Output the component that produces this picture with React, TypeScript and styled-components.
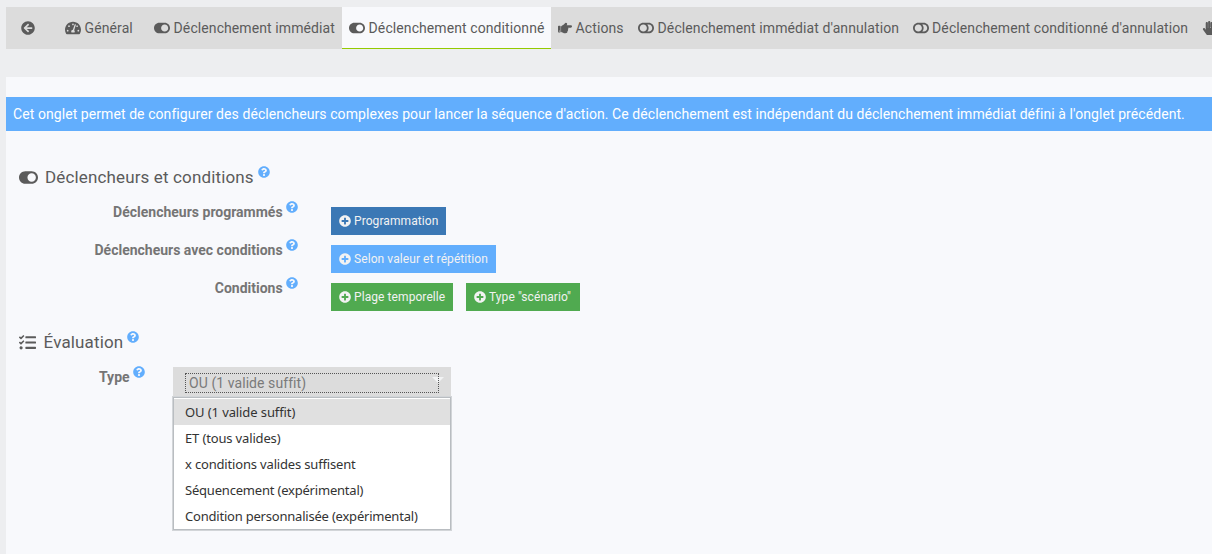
import React from 'react';
import styled, { createGlobalStyle } from 'styled-components';
import {
  FaArrowCircleLeft,
  FaTachometerAlt,
  FaToggleOn,
  FaToggleOff,
  FaHandPointRight,
  FaHandPaper,
  FaQuestionCircle,
  FaPlusCircle,
  FaTasks,
} from 'react-icons/fa';

const Global = createGlobalStyle`
  * { box-sizing: border-box; }
  body {
    margin: 0;
    background: #edeef0;
    color: #5b5b5b;
    font: 14px/20px Roboto, sans-serif;
    overflow: hidden;
  }
  svg { display: block; flex: none; }
`;

const Page = styled.div`
  width: 1212px;
  height: 554px;
  padding: 7px 0 0 6px;
  display: flex;
  flex-direction: column;
  overflow: hidden;
`;

const TabBar = styled.nav`
  height: 42px;
  flex: none;
  display: flex;
  background: #dcdcdc;
  overflow: hidden;
`;

const Tab = styled.a<{ $width: number; $active?: boolean; $indent?: number }>`
  flex: none;
  width: ${(p) => p.$width}px;
  padding-left: ${(p) => p.$indent ?? 7}px;
  display: flex;
  align-items: center;
  gap: 3.6px;
  white-space: nowrap;
  letter-spacing: 0.09px;
  background: ${(p) => (p.$active ? '#f8f9fc' : 'transparent')};
  box-shadow: ${(p) => (p.$active ? 'inset 0 -1px #94ca02' : 'none')};
`;

const Panel = styled.main`
  flex: 1;
  margin-top: 28px;
  padding-top: 20px;
  background: #f8f9fc;
`;

const Notice = styled.div`
  height: 34px;
  padding: 0 7px;
  line-height: 34px;
  letter-spacing: 0.073px;
  color: #fff;
  background: #62aefd;
  white-space: nowrap;
`;

const Legend = styled.h2<{ $top: number; $gap: number }>`
  margin: ${(p) => p.$top}px 0 0 13px;
  height: 24px;
  display: flex;
  align-items: center;
  font-size: 17px;
  font-weight: 400;
  line-height: 24px;
  letter-spacing: 0.14px;
  white-space: nowrap;

  > svg:first-child { margin-right: ${(p) => p.$gap}px; }
`;

const Help = styled(FaQuestionCircle)`
  width: 12px;
  height: 12px;
  margin: -10px 0 0 4px;
  color: #62aefd;
`;

const FormRow = styled.div<{ $top?: number }>`
  display: flex;
  height: 28px;
  margin-top: ${(p) => p.$top ?? 10}px;
`;

const Label = styled.label<{ $width: number; $offset?: number }>`
  width: ${(p) => p.$width}px;
  height: 10px;
  margin-top: ${(p) => p.$offset ?? 0}px;
  flex: none;
  display: flex;
  justify-content: flex-end;
  align-items: center;
  font-weight: 700;
  color: #757575;
  white-space: nowrap;

  ${Help} { margin-left: 3.4px; }
`;

const Buttons = styled.div`
  display: flex;
  gap: 13px;
  margin-left: 33px;
`;

const Button = styled.button<{ $color: string; $width: number }>`
  width: ${(p) => p.$width}px;
  height: 28px;
  padding: 0 0 0 8px;
  border: 0;
  display: flex;
  align-items: center;
  gap: 3px;
  font: 12px/18px Roboto, sans-serif;
  letter-spacing: 0.08px;
  color: #f2f2f2;
  white-space: nowrap;
  background: ${(p) => p.$color};
`;

const Select = styled.div`
  position: relative;
  width: 278px;
  height: 32px;
  margin-left: 28px;
  padding: 6px 12px;
  color: #7a7a7a;
  background: #dcdcdc;
`;

const SelectValue = styled.div`
  position: relative;
  z-index: 1;
  width: 254px;
  height: 20px;
  padding-left: 3px;
  border: 1px dotted #555;
  line-height: 19px;
  letter-spacing: 0.07px;
`;

const Caret = styled.svg`
  position: absolute;
  top: 10px;
  right: 7px;
`;

const Menu = styled.ul`
  position: absolute;
  z-index: 2;
  top: 30px;
  left: 0;
  width: 278px;
  height: 133px;
  margin: 0;
  padding: 1px 0 0;
  list-style: none;
  background: #fff;
  border: 1px solid #b9bdc1;
  box-shadow: 0 0 0 1px #d2d5d8;
`;

const Option = styled.li<{ $selected?: boolean; $spacing: number }>`
  height: 26px;
  padding-left: 11px;
  font: 13px/26px "Noto Sans", sans-serif;
  letter-spacing: ${(p) => p.$spacing}px;
  color: #333;
  white-space: nowrap;
  background: ${(p) => (p.$selected ? '#e0e0e0' : 'transparent')};
`;

const options = [
  { text: 'OU (1 valide suffit)', spacing: -0.1 },
  { text: 'ET (tous valides)', spacing: -0.15 },
  { text: 'x conditions valides suffisent', spacing: -0.17 },
  { text: 'Séquencement (expérimental)', spacing: -0.2 },
  { text: 'Condition personnalisée (expérimental)', spacing: -0.21 },
];

export default function App() {
  return (
    <>
      <Global />
      <Page>
        <TabBar>
          <Tab $width={52} $indent={15}><FaArrowCircleLeft size={14} /></Tab>
          <Tab $width={89}><FaTachometerAlt size={16} />Général</Tab>
          <Tab $width={195}><FaToggleOn size={16} />Déclenchement immédiat</Tab>
          <Tab $width={209} $active><FaToggleOn size={16} />Déclenchement conditionné</Tab>
          <Tab $width={80}><FaHandPointRight size={14} />Actions</Tab>
          <Tab $width={274}><FaToggleOff size={16} />Déclenchement immédiat d'annulation</Tab>
          <Tab $width={290} $indent={7.5}><FaToggleOff size={16} />Déclenchement conditionné d'annulation</Tab>
          <Tab $width={40}><FaHandPaper size={14} /></Tab>
        </TabBar>
        <Panel>
          <Notice>
            Cet onglet permet de configurer des déclencheurs complexes pour lancer la séquence d'action. Ce déclenchement est indépendant du déclenchement immédiat défini à l'onglet précédent.
          </Notice>
          <Legend $top={34} $gap={7}>
            <FaToggleOn size={19} />Déclencheurs et conditions<Help />
          </Legend>
          <FormRow $top={18}>
            <Label $width={292}>Déclencheurs programmés<Help /></Label>
            <Buttons>
              <Button $color="#3b78b5" $width={115}><FaPlusCircle size={12} />Programmation</Button>
            </Buttons>
          </FormRow>
          <FormRow>
            <Label $width={292}>Déclencheurs avec conditions<Help /></Label>
            <Buttons>
              <Button $color="#62aefd" $width={165}><FaPlusCircle size={12} />Selon valeur et répétition</Button>
            </Buttons>
          </FormRow>
          <FormRow>
            <Label $width={292}>Conditions<Help /></Label>
            <Buttons>
              <Button $color="#50aa50" $width={122}><FaPlusCircle size={12} />Plage temporelle</Button>
              <Button $color="#50aa50" $width={114}><FaPlusCircle size={12} />Type "scénario"</Button>
            </Buttons>
          </FormRow>
          <Legend $top={19} $gap={7.6}>
            <FaTasks size={17} />Évaluation<Help />
          </Legend>
          <FormRow $top={13}>
            <Label $width={139} $offset={5}>Type<Help /></Label>
            <Select>
              <SelectValue>OU (1 valide suffit)</SelectValue>
              <Caret width="12" height="6" viewBox="0 0 12 6"><path d="M0 0h12L6 6z" fill="#f2f3f4" /></Caret>
              <Menu>
                {options.map((o, i) => (
                  <Option key={o.text} $selected={i === 0} $spacing={o.spacing}>{o.text}</Option>
                ))}
              </Menu>
            </Select>
          </FormRow>
        </Panel>
      </Page>
    </>
  );
}
